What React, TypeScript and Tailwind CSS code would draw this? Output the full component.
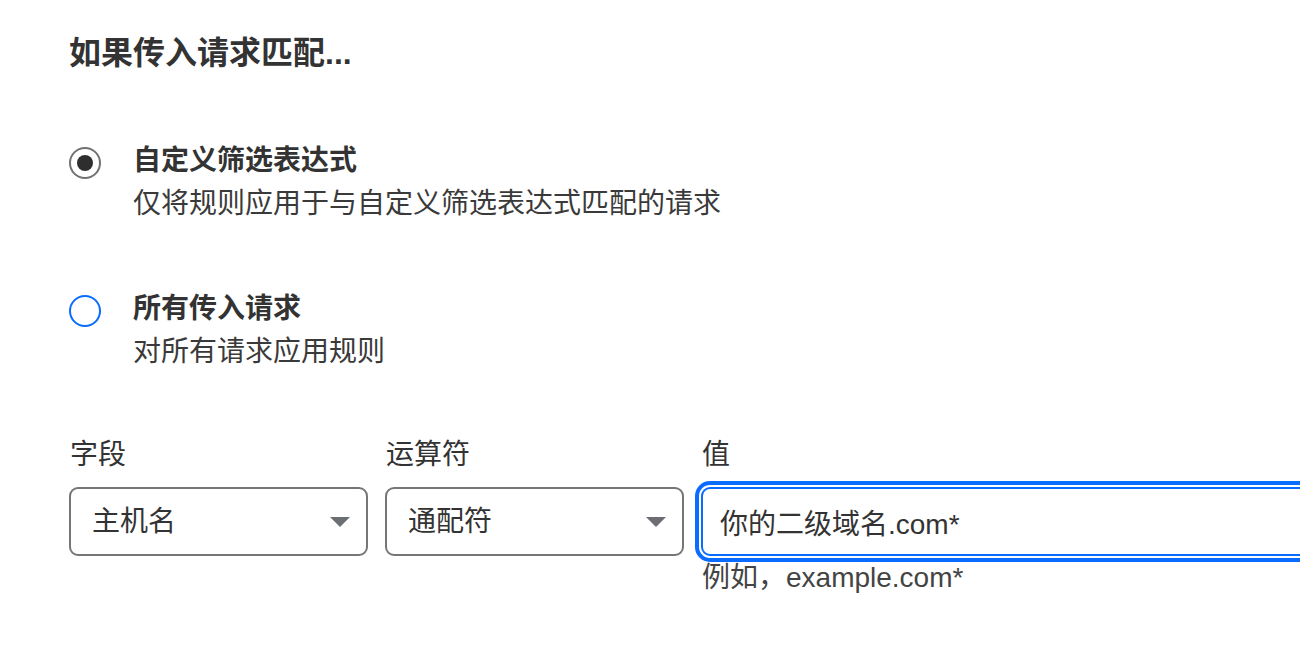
import { useState } from "react";

const font = "font-['Liberation_Sans','Noto_Sans_CJK_SC',sans-serif]";

function Radio({ checked }: { checked: boolean }) {
  return checked ? (
    <span className="flex h-[32px] w-[32px] shrink-0 items-center justify-center rounded-full border-2 border-[#717171] bg-white">
      <span className="block h-[16px] w-[16px] rounded-full bg-[#2e2e2e]" />
    </span>
  ) : (
    <span className="block h-[32px] w-[32px] shrink-0 rounded-full border-2 border-[#0a6cff] bg-white" />
  );
}

function Select({ value }: { value: string }) {
  return (
    <div className="flex h-[69px] w-[299px] items-center justify-between rounded-[9px] border-2 border-[#767676] bg-white pl-[21px] pr-[15px]">
      <span className="text-[28px] leading-[40px] text-[#333]">{value}</span>
      <svg width="22" height="12" viewBox="0 0 22 12">
        <path d="M1 1h20L11 11z" fill="#6b6e72" />
      </svg>
    </div>
  );
}

export default function App() {
  const [mode, setMode] = useState<"custom" | "all">("custom");
  const options = [
    { id: "custom" as const, title: "自定义筛选表达式", desc: "仅将规则应用于与自定义筛选表达式匹配的请求" },
    { id: "all" as const, title: "所有传入请求", desc: "对所有请求应用规则" },
  ];

  return (
    <div className={`h-[654px] w-[1300px] overflow-hidden bg-white pl-[69px] pt-[33px] text-[#333] ${font}`}>
      <h2 className="text-[32px] font-bold leading-[40px] text-[#333]">如果传入请求匹配...</h2>

      <div className="mt-[67px] flex flex-col gap-[62px]">
        {options.map((o) => (
          <label key={o.id} className="flex cursor-pointer gap-[32px]" onClick={() => setMode(o.id)}>
            <span className="block pt-[7px]">
              <Radio checked={mode === o.id} />
            </span>
            <span className="flex flex-col">
              <span className="text-[28px] font-bold leading-[42px] text-[#333]">{o.title}</span>
              <span className="text-[28px] leading-[44px] text-[#3a3a3a]">{o.desc}</span>
            </span>
          </label>
        ))}
      </div>

      <div className="mt-[61px] flex gap-[17px]">
        <div className="flex flex-col">
          <span className="pl-[1px] text-[28px] leading-[40px] text-[#333]">字段</span>
          <div className="mt-[12px]">
            <Select value="主机名" />
          </div>
        </div>
        <div className="flex flex-col">
          <span className="pl-[1px] text-[28px] leading-[40px] text-[#333]">运算符</span>
          <div className="mt-[12px]">
            <Select value="通配符" />
          </div>
        </div>
        <div className="flex flex-col">
          <span className="pl-[1px] text-[28px] leading-[40px] text-[#333]">值</span>
          <div className="mt-[12px] w-[640px]">
            <input
              defaultValue="你的二级域名.com*"
              className="h-[69px] w-full rounded-[9px] border-2 border-[#0a6cff] bg-white pl-[17px] text-[28px] text-[#333] shadow-[0_0_0_2px_#fff,0_0_0_6px_#0a6cff] outline-none"
            />
          </div>
          <span className="mt-[2px] pl-[1px] text-[28px] leading-[40px] text-[#444]">例如，example.com*</span>
        </div>
      </div>
    </div>
  );
}
